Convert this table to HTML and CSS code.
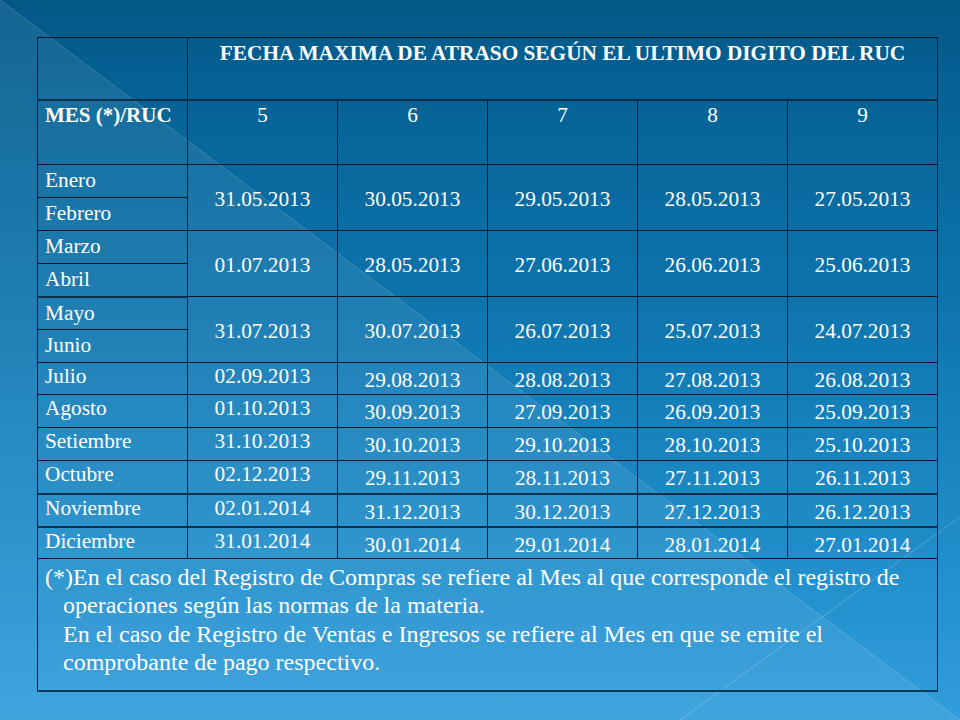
FILE: index.html
```html
<!DOCTYPE html>
<html lang="es">
<head>
<meta charset="utf-8">
<title>Fecha máxima de atraso</title>
<link rel="stylesheet" href="styles.css">
</head>
<body>
<div class="slide">
  <table class="grid">
    <colgroup>
      <col class="c"><col class="c"><col class="c"><col class="c"><col class="c"><col class="c">
    </colgroup>
    <tr class="r-title">
      <td></td>
      <td colspan="5" class="title">FECHA MAXIMA DE ATRASO SEGÚN EL ULTIMO DIGITO DEL RUC</td>
    </tr>
    <tr class="r-head">
      <td class="mes-h">MES (*)/RUC</td>
      <td class="num">5</td><td class="num">6</td><td class="num">7</td><td class="num">8</td><td class="num">9</td>
    </tr>
    <tr class="r33">
      <td class="m1">Enero</td>
      <td rowspan="2" class="dm">31.05.2013</td><td rowspan="2" class="dm">30.05.2013</td><td rowspan="2" class="dm">29.05.2013</td><td rowspan="2" class="dm">28.05.2013</td><td rowspan="2" class="dm">27.05.2013</td>
    </tr>
    <tr class="r33"><td class="m1">Febrero</td></tr>
    <tr class="r33">
      <td class="m1">Marzo</td>
      <td rowspan="2" class="dm">01.07.2013</td><td rowspan="2" class="dm">28.05.2013</td><td rowspan="2" class="dm">27.06.2013</td><td rowspan="2" class="dm">26.06.2013</td><td rowspan="2" class="dm">25.06.2013</td>
    </tr>
    <tr class="r33 thick"><td class="m1">Abril</td></tr>
    <tr class="r33">
      <td class="m1">Mayo</td>
      <td rowspan="2" class="dm">31.07.2013</td><td rowspan="2" class="dm">30.07.2013</td><td rowspan="2" class="dm">26.07.2013</td><td rowspan="2" class="dm">25.07.2013</td><td rowspan="2" class="dm">24.07.2013</td>
    </tr>
    <tr class="r33"><td class="m1">Junio</td></tr>
    <tr class="r32">
      <td class="m2">Julio</td><td class="d1">02.09.2013</td><td class="d">29.08.2013</td><td class="d">28.08.2013</td><td class="d">27.08.2013</td><td class="d">26.08.2013</td>
    </tr>
    <tr class="r33">
      <td class="m2">Agosto</td><td class="d1">01.10.2013</td><td class="d">30.09.2013</td><td class="d">27.09.2013</td><td class="d">26.09.2013</td><td class="d">25.09.2013</td>
    </tr>
    <tr class="r33">
      <td class="m2">Setiembre</td><td class="d1">31.10.2013</td><td class="d">30.10.2013</td><td class="d">29.10.2013</td><td class="d">28.10.2013</td><td class="d">25.10.2013</td>
    </tr>
    <tr class="r33 thick">
      <td class="m2">Octubre</td><td class="d1">02.12.2013</td><td class="d">29.11.2013</td><td class="d">28.11.2013</td><td class="d">27.11.2013</td><td class="d">26.11.2013</td>
    </tr>
    <tr class="r33 thick">
      <td class="m2">Noviembre</td><td class="d1">02.01.2014</td><td class="d">31.12.2013</td><td class="d">30.12.2013</td><td class="d">27.12.2013</td><td class="d">26.12.2013</td>
    </tr>
    <tr class="r32">
      <td class="m2">Diciembre</td><td class="d1">31.01.2014</td><td class="d">30.01.2014</td><td class="d">29.01.2014</td><td class="d">28.01.2014</td><td class="d">27.01.2014</td>
    </tr>
    <tr class="r-note">
      <td colspan="6" class="note">
        <p class="p1">(*)En el caso del Registro de Compras se refiere al Mes al que corresponde el registro de operaciones según las normas de la materia.</p>
        <p class="p2">En el caso de Registro de Ventas e Ingresos se refiere al Mes en que se emite el comprobante de pago respectivo.</p>
      </td>
    </tr>
  </table>
</div>
</body>
</html>
```
FILE: styles.css
```css
html, body {
  margin: 0;
  padding: 0;
}
body {
  width: 960px;
  height: 720px;
  overflow: hidden;
}
.slide {
  box-sizing: border-box;
  width: 960px;
  height: 720px;
  padding: 37px 0 0 37px;
  font-family: "Liberation Serif", "Times New Roman", serif;
  color: #ffffff;
  background:
    linear-gradient(to bottom right, transparent calc(50% - 0.8px), rgba(255,255,255,0.22) 50%, transparent calc(50% + 0.8px)) 680px 517px / 280px 203px no-repeat,
    linear-gradient(to top right, transparent calc(50% - 0.8px), rgba(255,255,255,0.16) 50%, transparent calc(50% + 0.8px)),
    linear-gradient(to top right, rgba(255,255,255,0.07) 50%, transparent 50%),
    linear-gradient(to bottom, #045888 0%, #07679b 20%, #0d73ab 40%, #1782bd 60%, #2290cd 80%, #329ddb 100%);
}
.grid {
  border-collapse: collapse;
  table-layout: fixed;
  width: 901px;
}
.grid col.c {
  width: 150px;
}
.grid td {
  border: 1px solid #0b1620;
  padding: 0;
  vertical-align: top;
  line-height: 24px;
  font-size: 21.3px;
  white-space: nowrap;
}
.r-title { height: 62px; }
.r-head { height: 65px; }
.r33 { height: 33px; }
.r32 { height: 32px; }
.r-note { height: 132px; }

.r-head td { border-top: 2px solid #0c2e48; }
.thick td { border-bottom: 2px solid #0c2e48; }
.r-note td { border-bottom: 2px solid #0c3a5c; }

.title {
  font-weight: bold;
  font-size: 21.3px !important;
  text-align: center;
  padding-top: 3px !important;
}
.mes-h {
  font-weight: bold;
  font-size: 21px !important;
  padding: 2px 0 0 7px !important;
}
.num {
  text-align: center;
  padding-top: 2px !important;
}
.m1 {
  padding: 3px 0 0 7px !important;
}
.m2 {
  padding: 1px 0 0 7px !important;
}
.dm {
  text-align: center;
  vertical-align: middle !important;
  padding-top: 3px !important;
}
.d1 {
  text-align: center;
  padding-top: 1px !important;
}
.d {
  text-align: center;
  padding-top: 5px !important;
}
.note {
  white-space: normal !important;
  font-size: 24px !important;
  line-height: 28.3px !important;
  padding: 4px 10px 0 25px !important;
}
.note p {
  margin: 0;
}
.p1 {
  text-indent: -18px;
}
```
